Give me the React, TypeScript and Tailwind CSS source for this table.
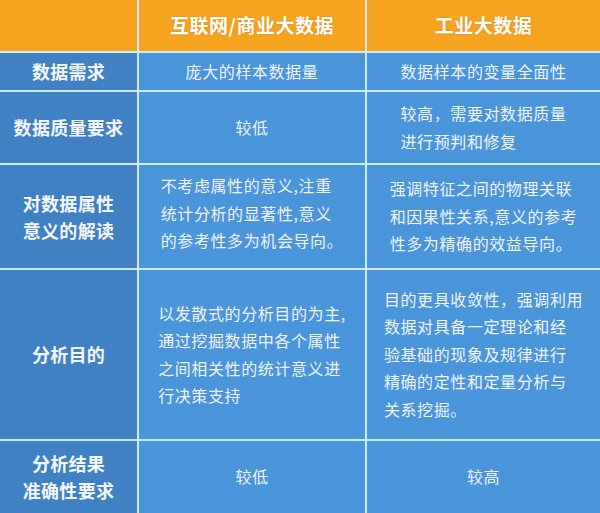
import React from "react";

const font = { fontFamily: '"Noto Sans CJK SC", "Noto Sans", sans-serif' };

function Head({ children }: { children?: React.ReactNode }) {
  return (
    <div className="bg-[#f6a41f] flex items-center justify-center text-white font-bold text-[19px] tracking-[0.5px] [text-shadow:0_0_2px_rgba(150,80,0,0.35)]">
      {children}
    </div>
  );
}

function Label({ lines }: { lines: string[] }) {
  return (
    <div className="bg-[#3f81c3] flex flex-col items-center justify-center text-[#f4f8fc] font-bold text-[18px] leading-[27px] tracking-[0.3px]">
      {lines.map((l, i) => (
        <div key={i} className="whitespace-nowrap">{l}</div>
      ))}
    </div>
  );
}

function Cell({ lines, pt = 0 }: { lines: string[]; pt?: number }) {
  return (
    <div className="bg-[#4b95db] flex items-center justify-center text-[#eef4fa] text-[16px] leading-[27.5px] tracking-[0.6px]">
      <div className="text-left" style={pt ? { marginTop: pt } : undefined}>
        {lines.map((l, i) => (
          <div key={i} className="whitespace-nowrap">{l}</div>
        ))}
      </div>
    </div>
  );
}

export default function App() {
  return (
    <div
      style={font}
      className="w-[600px] h-[513px] overflow-hidden bg-[#cdebf6] grid grid-cols-[137px_226px_233px] grid-rows-[51px_37px_71px_103px_169px_72px] gap-[2px]"
    >
      <Head />
      <Head>互联网/商业大数据</Head>
      <Head>工业大数据</Head>

      <Label lines={["数据需求"]} />
      <Cell lines={["庞大的样本数据量"]} />
      <Cell lines={["数据样本的变量全面性"]} />

      <Label lines={["数据质量要求"]} />
      <Cell lines={["较低"]} />
      <Cell lines={["较高，需要对数据质量", "进行预判和修复"]} />

      <Label lines={["对数据属性", "意义的解读"]} />
      <Cell pt={-6} lines={["不考虑属性的意义,注重", "统计分析的显著性,意义", "的参考性多为机会导向。"]} />
      <Cell lines={["强调特征之间的物理关联", "和因果性关系,意义的参考", "性多为精确的效益导向。"]} />

      <Label lines={["分析目的"]} />
      <Cell lines={["以发散式的分析目的为主,", "通过挖掘数据中各个属性", "之间相关性的统计意义进", "行决策支持"]} />
      <Cell lines={["目的更具收敛性，强调利用", "数据对具备一定理论和经", "验基础的现象及规律进行", "精确的定性和定量分析与", "关系挖掘。"]} />

      <Label lines={["分析结果", "准确性要求"]} />
      <Cell lines={["较低"]} />
      <Cell lines={["较高"]} />
    </div>
  );
}
